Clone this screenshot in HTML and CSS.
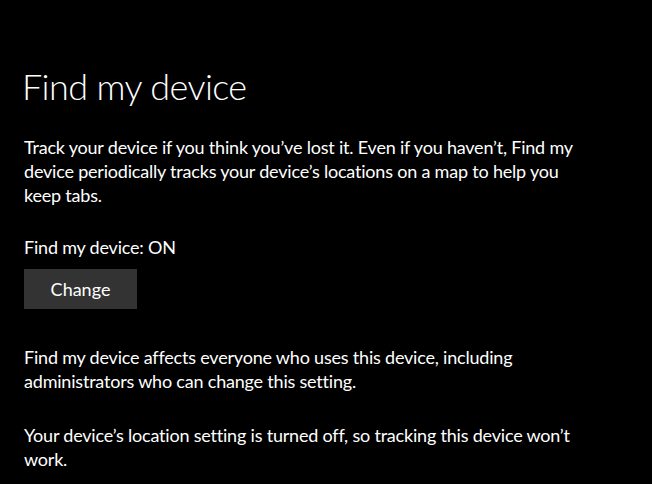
FILE: index.html
```html
<!DOCTYPE html>
<html lang="en">
<head>
    <meta charset="UTF-8">
    <title>Find my device</title>
    <link rel="stylesheet" href="styles.css">
</head>
<body>
    <div class="page">
        <h1 class="page-title">Find my device</h1>

        <p class="intro">Track your device if you think you’ve lost it. Even if you haven’t, Find my device periodically tracks your device’s locations on a map to help you keep tabs.</p>

        <p class="status">Find my device: ON</p>
        <button class="change-btn">Change</button>

        <p class="note">Find my device affects everyone who uses this device, including administrators who can change this setting.</p>

        <p class="note note-last">Your device’s location setting is turned off, so tracking this device won’t work.</p>
    </div>
</body>
</html>
```

FILE: styles.css
```css
body {
    margin: 0;
    background-color: #000;
    color: #fff;
    font-family: Lato, "Open Sans", sans-serif;
}
.page {
    padding: 0 24px;
    width: 560px;
}
.page-title {
    margin: 0;
    padding-top: 63px;
    font-size: 36px;
    font-weight: 300;
    line-height: 46px;
    letter-spacing: -0.6px;
    margin-left: -2px;
}
p {
    margin: 0;
    font-size: 18px;
    line-height: 24px;
    letter-spacing: -0.2px;
}
.intro {
    margin-top: 26px;
}
.status {
    margin-top: 28px;
}
.change-btn {
    display: block;
    margin-top: 10px;
    width: 113px;
    height: 40px;
    border: none;
    background-color: #333;
    color: #fff;
    font-family: inherit;
    font-size: 18px;
    padding: 0;
}
.note {
    margin-top: 36px;
}
.note-last {
    margin-top: 30px;
}
```
